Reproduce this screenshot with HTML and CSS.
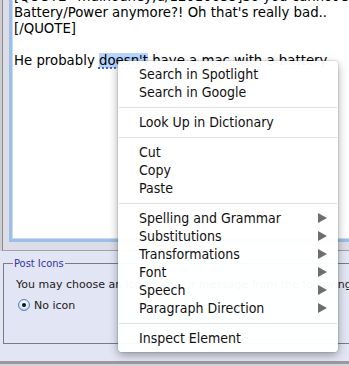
FILE: index.html
```html
<!DOCTYPE html>
<html>
<head>
<meta charset="utf-8">
<link rel="stylesheet" href="styles.css">
</head>
<body>
<div class="page">
  <div class="editor-cell">
    <div class="editor-inner">
      <div class="textarea">
        <div class="line">[QUOTE=mulhouney;u/12010035]So you cannot see the</div>
        <div class="line">Battery/Power anymore?! Oh that's really bad..</div>
        <div class="line">[/QUOTE]</div>
        <div class="line">&nbsp;</div>
        <div class="line">He probably <span class="sel"><span class="spell">doesn't</span></span> have a mac with a battery.</div>
      </div>
    </div>
  </div>

  <fieldset class="icons">
    <legend>Post Icons</legend>
    <div class="hint">You may choose an icon for your message from the following list:</div>
    <div class="radio-row">
      <span class="radio"><span class="dot"></span></span>
      <span class="radio-label">No icon</span>
    </div>
  </fieldset>

  <div class="footer-line"></div>
</div>

<div class="menu">
  <div class="item">Search in Spotlight</div>
  <div class="item">Search in Google</div>
  <div class="sep"></div>
  <div class="item">Look Up in Dictionary</div>
  <div class="sep"></div>
  <div class="item">Cut</div>
  <div class="item">Copy</div>
  <div class="item">Paste</div>
  <div class="sep"></div>
  <div class="item sub">Spelling and Grammar<span class="arrow"></span></div>
  <div class="item sub">Substitutions<span class="arrow"></span></div>
  <div class="item sub">Transformations<span class="arrow"></span></div>
  <div class="item sub">Font<span class="arrow"></span></div>
  <div class="item sub">Speech<span class="arrow"></span></div>
  <div class="item sub">Paragraph Direction<span class="arrow"></span></div>
  <div class="sep"></div>
  <div class="item">Inspect Element</div>
</div>
</body>
</html>
```

FILE: styles.css
```css
html, body {
  margin: 0;
  padding: 0;
  overflow: hidden;
  background: #d4d4d6;
}

body {
  width: 349px;
  height: 366px;
  position: relative;
  font-family: "DejaVu Sans", Verdana, sans-serif;
}

.page {
  width: 390px;
  margin-top: -11px;
  background: #e2e5f3;
}

.editor-cell {
  border-left: 2px solid #cfcfd3;
}

.editor-inner {
  border-left: 1px solid #8a8a8a;
  border-bottom: 1px solid #a2a2a8;
  background: #dcdde7;
  padding: 0 0 8px 6px;
}

.textarea {
  background: #fff;
  height: 250px;
  padding-left: 2px;
  border-left: 3px solid #9bbfe9;
  border-bottom: 3px solid #9bbfe9;
  box-shadow: inset 1px 0 0 #c9dcf4, inset 0 -1px 0 #c9dcf4;
  font-size: 13.3px;
  line-height: 16px;
  color: #000;
  overflow: hidden;
}

.line {
  white-space: pre;
}

.sel {
  background: #b5d5ff;
}

.spell {
  text-decoration: underline dotted #3b63d6;
  text-decoration-thickness: 2px;
  text-underline-offset: 2px;
}

.icons {
  margin: 6px 0 0 3px;
  padding: 0 0 30px 12px;
  border: 1px solid #7c7c80;
  min-width: 0;
}

.icons legend {
  margin-left: -3px;
  padding: 0 1px;
  font-family: "DejaVu Sans Condensed", "DejaVu Sans", sans-serif;
  font-size: 11px;
  color: #3434a8;
  line-height: 13px;
}

.hint {
  margin-top: 7px;
  font-size: 11px;
  line-height: 16px;
  color: #1a1a1a;
  white-space: nowrap;
}

.radio-row {
  margin-top: 4px;
  display: flex;
  align-items: center;
  height: 16px;
  font-size: 11px;
  color: #1a1a1a;
}

.radio {
  width: 12px;
  height: 12px;
  margin-left: 2px;
  margin-right: 4px;
  border-radius: 50%;
  box-sizing: border-box;
  border: 1px solid #5d7fb4;
  background: radial-gradient(circle at 50% 35%, #ffffff 0%, #cfe2fb 60%, #8fb6ea 100%);
  display: flex;
  align-items: center;
  justify-content: center;
}

.radio .dot {
  width: 4px;
  height: 4px;
  border-radius: 50%;
  background: #111;
}

.footer-line {
  margin-top: 17px;
  height: 3px;
  background: #9a9a9e;
}

.menu {
  position: absolute;
  left: 118px;
  top: 61px;
  width: 220px;
  height: 291px;
  box-sizing: border-box;
  padding: 4px 0 5px;
  background: rgba(255, 255, 255, 0.97);
  border-radius: 4px;
  box-shadow: 0 3px 10px rgba(0, 0, 0, 0.35), 0 0 0 1px rgba(0, 0, 0, 0.08);
  font-family: "DejaVu Sans Condensed", "DejaVu Sans", sans-serif;
  font-size: 14px;
  color: #111;
}

.item {
  height: 18px;
  line-height: 18px;
  padding-left: 21px;
  padding-right: 11px;
  display: flex;
  align-items: center;
  justify-content: space-between;
  white-space: nowrap;
}

.arrow {
  width: 0;
  height: 0;
  border-top: 5px solid transparent;
  border-bottom: 5px solid transparent;
  border-left: 9px solid #6d6d6d;
}

.sep {
  height: 1px;
  margin: 6px 1px 5px;
  background: #e0e0e0;
}
```
